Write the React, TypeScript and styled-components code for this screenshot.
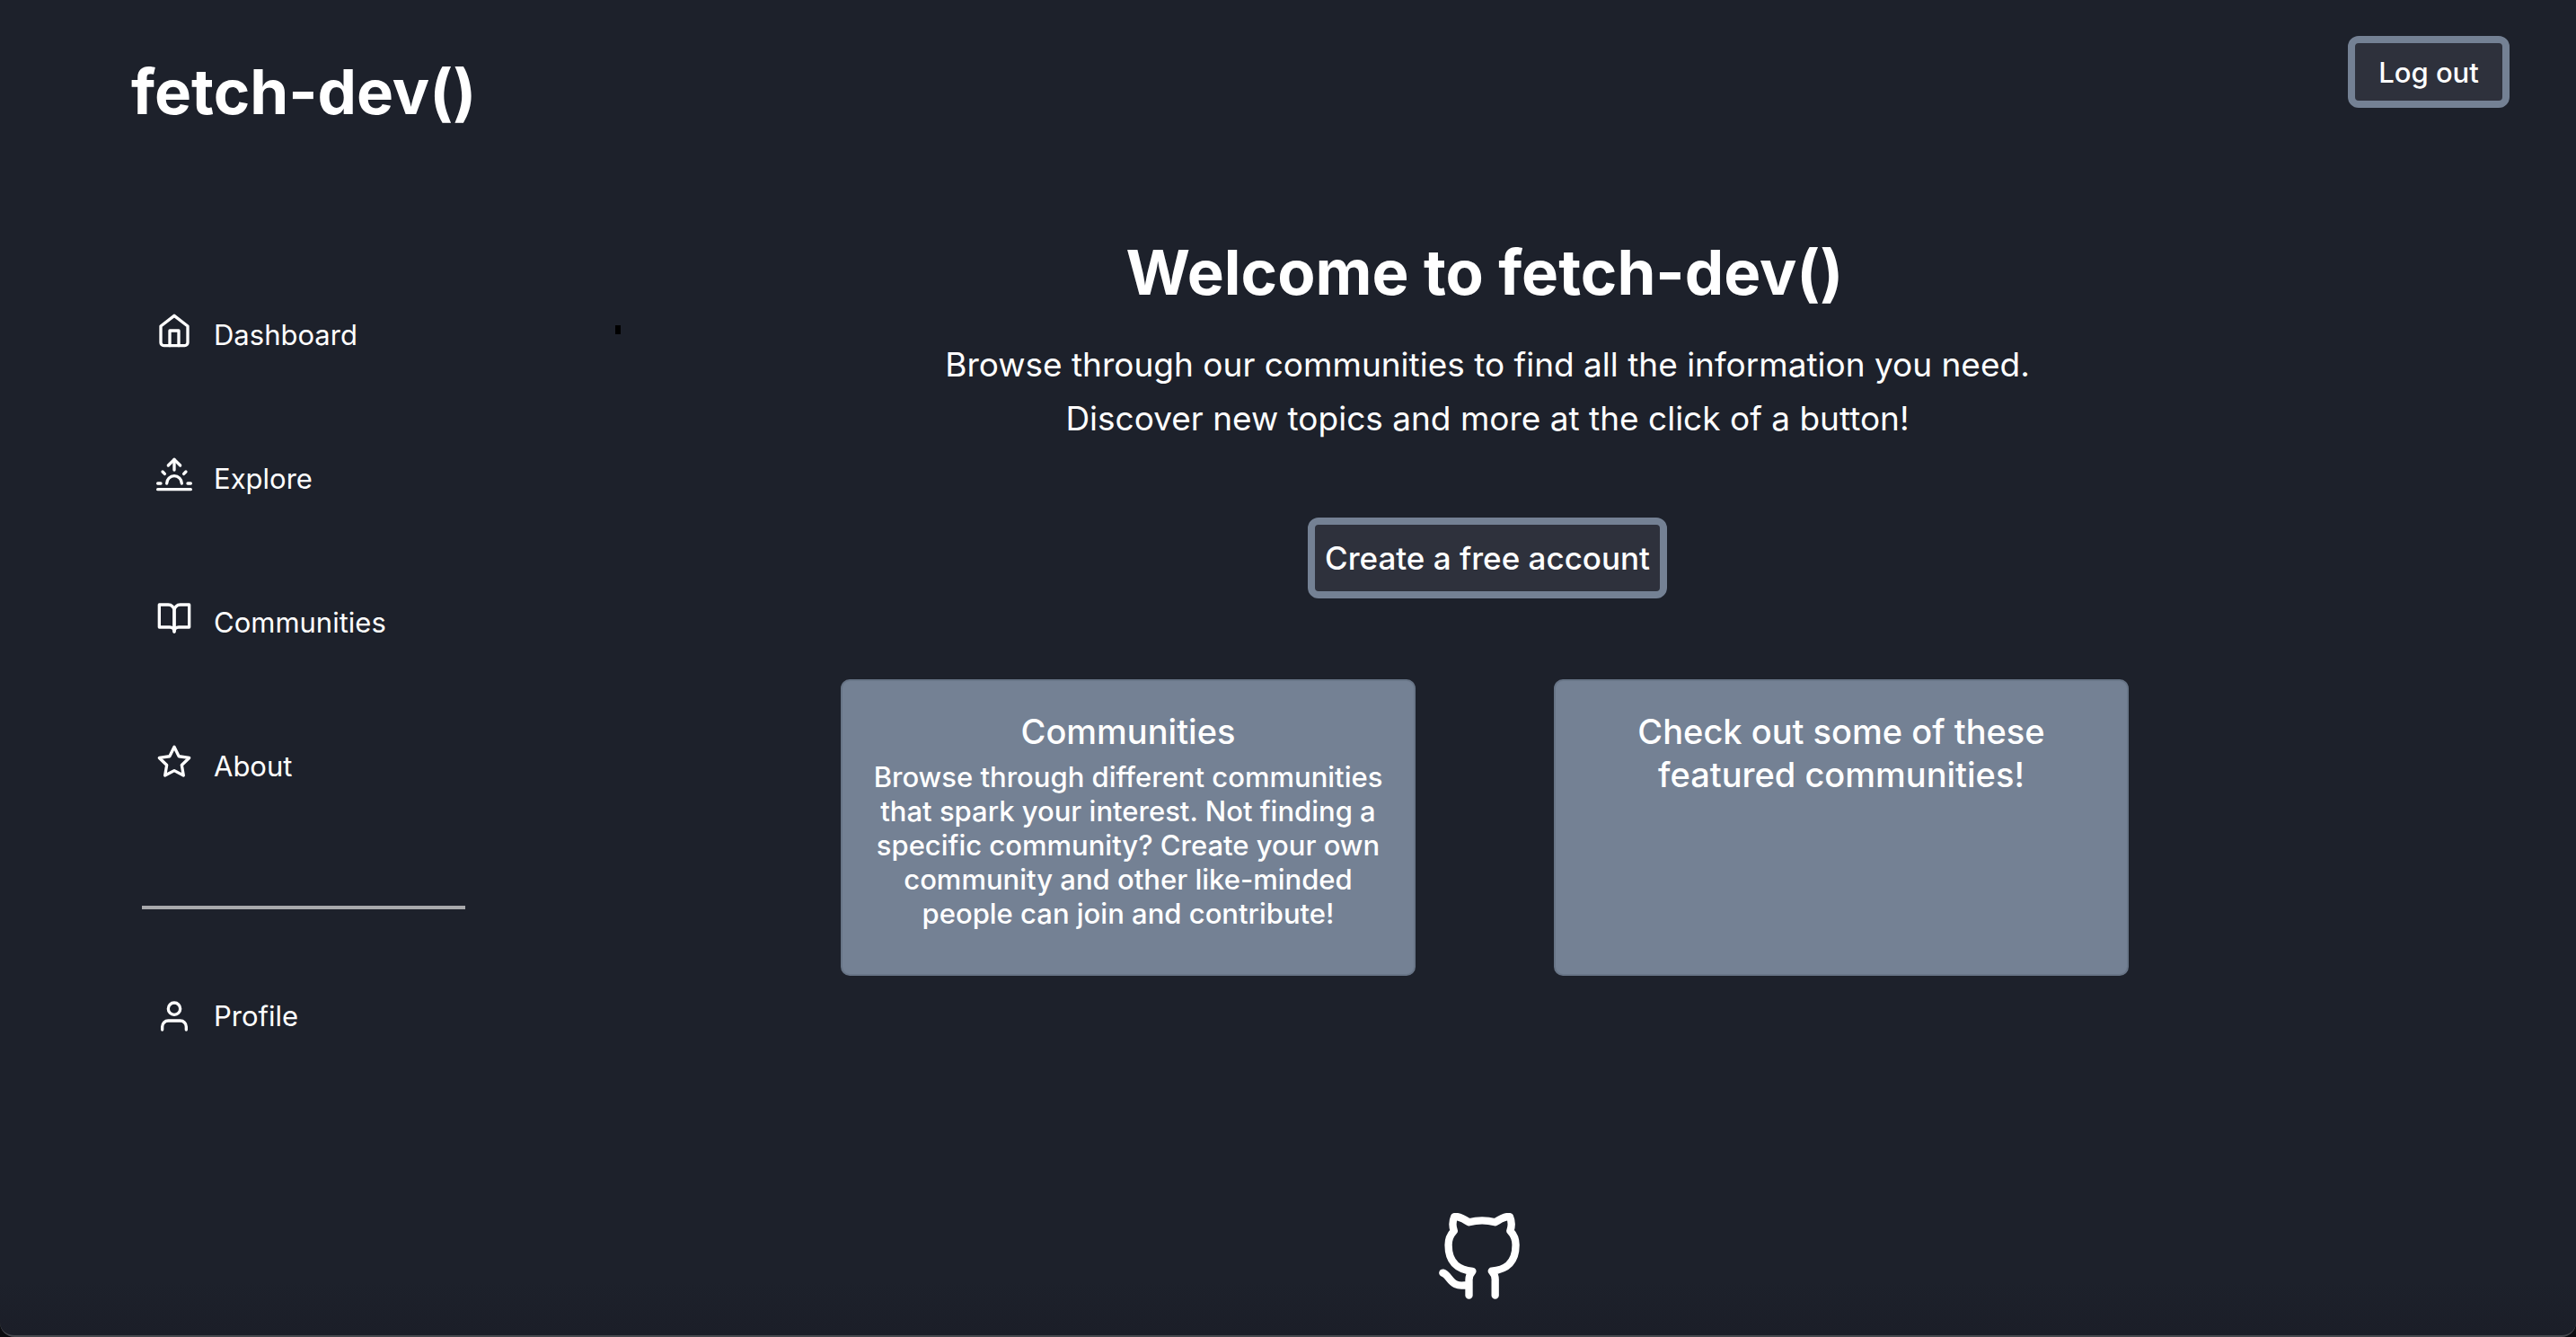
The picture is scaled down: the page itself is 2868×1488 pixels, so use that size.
import React from "react";
import styled, { createGlobalStyle } from "styled-components";
import { FiHome, FiSunrise, FiBookOpen, FiStar, FiUser, FiGithub } from "react-icons/fi";

const color = {
  page: "#1d212b",
  line: "#47494f",
  slate: "#748194",
  slateEdge: "#687587",
  control: "#2e313c",
  rule: "#a8a9ac",
  text: "#ffffff",
};

const GlobalStyle = createGlobalStyle`
  *, *::before, *::after { box-sizing: border-box; }
  html { background: #0b0c10; }
  body {
    margin: 0;
    color: ${color.text};
    font-family: Inter, "Noto Sans", sans-serif;
    font-size: 31px;
    line-height: 50px;
  }
  h1, h2, p, ul { margin: 0; padding: 0; }
`;

const Page = styled.div`
  display: flex;
  flex-direction: column;
  min-height: 100vh;
  background: linear-gradient(to bottom, transparent calc(100% - 60px), #1b1e28), ${color.page};
  border-bottom: 2px solid ${color.line};
  border-radius: 0 0 16px 16px;
`;

const Header = styled.header`
  display: flex;
  justify-content: space-between;
  align-items: flex-start;
  padding: 40px 74px 0 146px;
`;

const Title = styled.h1`
  font-size: 69px;
  font-weight: 700;
  line-height: 88px;
`;

const Brand = styled(Title)`
  padding-top: 18px;
`;

const Button = styled.button<{ $large?: boolean }>`
  width: ${(p) => (p.$large ? "400px" : "180px")};
  height: ${(p) => (p.$large ? "90px" : "80px")};
  padding: 0;
  border: 8px solid ${color.slate};
  border-radius: 12px;
  background: ${color.control};
  color: inherit;
  font-family: inherit;
  font-size: ${(p) => (p.$large ? "35px" : "31px")};
  font-weight: 500;
  white-space: nowrap;
  cursor: pointer;
`;

const Body = styled.div`
  flex: 1;
  display: grid;
  grid-template-columns: 685px 6px 1fr;
`;

const Sidebar = styled.nav`
  padding: 202px 167px 0 158px;
`;

const NavList = styled.ul`
  display: flex;
  flex-direction: column;
  gap: 110px;
  list-style: none;
`;

const NavLink = styled.a<{ $centered?: boolean }>`
  display: flex;
  align-items: ${(p) => (p.$centered ? "center" : "flex-start")};
  gap: 24px;
  padding-left: 16px;
  color: inherit;
  text-decoration: none;
`;

const Rule = styled.hr`
  height: 4px;
  margin: 130px 0 94px;
  border: 0;
  background: ${color.rule};
`;

const Caret = styled.div`
  height: 10px;
  margin-top: 216px;
  background: #000;
`;

const Main = styled.main`
  display: flex;
  flex-direction: column;
  align-items: center;
  padding: 113px 253px 36px 0;
`;

const Intro = styled.section`
  display: flex;
  flex-direction: column;
  align-items: center;
  padding-left: 6px;
`;

const Lead = styled.p`
  margin: 29px 0 80px;
  font-size: 37px;
  line-height: 60px;
  text-align: center;
`;

const Cards = styled.section`
  display: grid;
  grid-template-columns: repeat(2, minmax(0, 640px));
  gap: 154px;
  margin: 90px 0 264px;
`;

const Card = styled.article`
  min-height: 330px;
  padding: 32px 24px;
  border: 2px solid ${color.slateEdge};
  border-radius: 10px;
  background: ${color.slate};
  font-weight: 500;
  text-align: center;
`;

const CardTitle = styled.h2`
  padding: 0 40px;
  font-size: 38px;
  font-weight: 500;
  line-height: 48px;
`;

const CardText = styled.p`
  margin-top: 8px;
  line-height: 38px;
`;

const RepoLink = styled.a`
  display: flex;
  margin-right: 10px;
  color: inherit;
`;

const sections = [
  { label: "Dashboard", Icon: FiHome },
  { label: "Explore", Icon: FiSunrise },
  { label: "Communities", Icon: FiBookOpen },
  { label: "About", Icon: FiStar },
];

export default function App() {
  return (
    <>
      <GlobalStyle />
      <Page>
        <Header>
          <Brand>fetch-dev()</Brand>
          <Button type="button">Log out</Button>
        </Header>
        <Body>
          <Sidebar>
            <NavList>
              {sections.map(({ label, Icon }) => (
                <li key={label}>
                  <NavLink href="#">
                    <Icon size={40} />
                    {label}
                  </NavLink>
                </li>
              ))}
            </NavList>
            <Rule />
            <NavLink href="#" $centered>
              <FiUser size={40} />
              Profile
            </NavLink>
          </Sidebar>
          <Caret />
          <Main>
            <Title as="h2">Welcome to fetch-dev()</Title>
            <Intro>
              <Lead>
                Browse through our communities to find all the information you need.
                <br />
                Discover new topics and more at the click of a button!
              </Lead>
              <Button type="button" $large>
                Create a free account
              </Button>
            </Intro>
            <Cards>
              <Card>
                <CardTitle>Communities</CardTitle>
                <CardText>
                  Browse through different communities that spark your interest. Not finding a
                  specific community? Create your own community and other like-minded people can
                  join and contribute!
                </CardText>
              </Card>
              <Card>
                <CardTitle>Check out some of these featured communities!</CardTitle>
              </Card>
            </Cards>
            <RepoLink href="#" aria-label="GitHub">
              <FiGithub size={100} />
            </RepoLink>
          </Main>
        </Body>
      </Page>
    </>
  );
}
